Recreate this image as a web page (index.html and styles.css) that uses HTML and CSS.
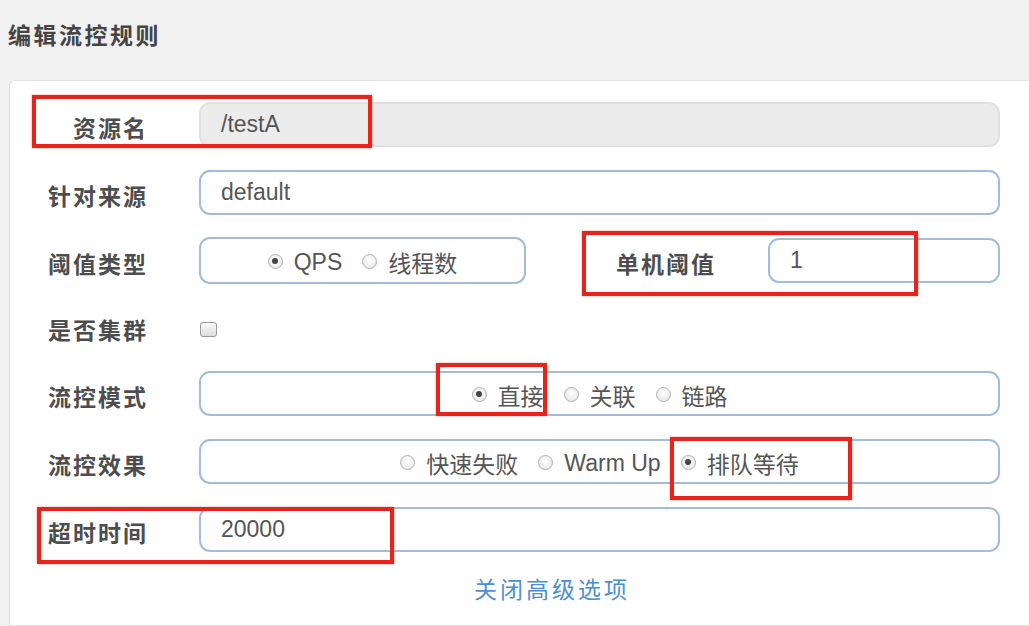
FILE: index.html
```html
<!DOCTYPE html>
<html lang="zh-CN">
<head>
<meta charset="utf-8">
<title>编辑流控规则</title>
<link rel="stylesheet" href="styles.css">
</head>
<body>
<div class="header"><h1 class="title">编辑流控规则</h1></div>
<div class="card">
  <div class="row">
    <div class="label">资源名</div>
    <div class="control"><div class="input disabled">/testA</div></div>
  </div>
  <div class="row">
    <div class="label">针对来源</div>
    <div class="control"><div class="input">default</div></div>
  </div>
  <div class="row">
    <div class="label">阈值类型</div>
    <div class="control split">
      <div class="radio-box narrow">
        <span class="opt"><span class="radio on"></span>QPS</span>
        <span class="opt"><span class="radio"></span>线程数</span>
      </div>
      <div class="label sub">单机阈值</div>
      <div class="input grow">1</div>
    </div>
  </div>
  <div class="row check-row">
    <div class="label">是否集群</div>
    <div class="control"><span class="checkbox"></span></div>
  </div>
  <div class="row">
    <div class="label">流控模式</div>
    <div class="control">
      <div class="radio-box">
        <span class="opt"><span class="radio on"></span>直接</span>
        <span class="opt"><span class="radio"></span>关联</span>
        <span class="opt"><span class="radio"></span>链路</span>
      </div>
    </div>
  </div>
  <div class="row">
    <div class="label">流控效果</div>
    <div class="control">
      <div class="radio-box">
        <span class="opt"><span class="radio"></span>快速失败</span>
        <span class="opt"><span class="radio"></span>Warm Up</span>
        <span class="opt"><span class="radio on"></span>排队等待</span>
      </div>
    </div>
  </div>
  <div class="row">
    <div class="label">超时时间</div>
    <div class="control"><div class="input">20000</div></div>
  </div>
  <div class="link-row"><a class="link">关闭高级选项</a></div>
</div>

<div class="mark m1"></div>
<div class="mark m2"></div>
<div class="mark m3"></div>
<div class="mark m4"></div>
<div class="mark m5"></div>
</body>
</html>
```
FILE: styles.css
```css
* { box-sizing: border-box; }
html, body { margin: 0; padding: 0; }
body {
  background: #f0f0f0;
  font-family: "Liberation Sans", "Noto Sans CJK SC", sans-serif;
  color: #555;
  width: 1029px;
  height: 626px;
  overflow: hidden;
  position: relative;
}
.header {
  height: 80px;
  display: flex;
  align-items: center;
  padding-left: 8px;
}
.title {
  margin: 0;
  font-size: 23px;
  font-weight: 600;
  letter-spacing: 2.5px;
  color: #444;
  padding-bottom: 12px;
}
.card {
  margin-left: 9px;
  background: #fff;
  border: 1px solid #e2e2e2;
  border-right: none;
  border-radius: 6px 0 0 0;
  height: 546px;
  padding: 21px 29px 0 0;
}
.row {
  display: flex;
  align-items: center;
  height: 45px;
  margin-bottom: 23px;
}
.check-row { height: 42px; }
.label {
  width: 138px;
  flex: none;
  text-align: right;
  font-size: 23px;
  font-weight: 600;
  letter-spacing: 2px;
  color: #4d4d4d;
  padding-top: 4px;
  margin-right: 51px;
}
.control {
  flex: 1;
  display: flex;
  align-items: center;
  height: 100%;
}
.input {
  flex: 1;
  height: 45px;
  border: 2px solid #a3bcdb;
  border-radius: 11px;
  padding-left: 20px;
  font-size: 23px;
  line-height: 40px;
  color: #555;
  background: #fff;
}
.input.disabled {
  background: #ececec;
  border-color: #e0e0e0;
}
.split .label.sub {
  width: 190px;
  margin-right: 52px;
}
.radio-box {
  flex: 1;
  height: 45px;
  border: 2px solid #a3bcdb;
  border-radius: 11px;
  display: flex;
  align-items: center;
  justify-content: center;
  gap: 20px;
  font-size: 23px;
  color: #555;
  padding-top: 3px;
}
.radio-box.narrow {
  flex: none;
  width: 327px;
  height: 47px;
}
.opt {
  display: inline-flex;
  align-items: center;
}
.radio {
  width: 15px;
  height: 15px;
  border-radius: 50%;
  border: 1px solid #b0b0b0;
  background: radial-gradient(circle at 50% 40%, #fff 0%, #e2e2e2 100%);
  margin-right: 11px;
  position: relative;
  margin-top: -2px;
}
.radio.on::after {
  content: "";
  position: absolute;
  left: 3.5px;
  top: 3.5px;
  width: 6px;
  height: 6px;
  border-radius: 50%;
  background: #444;
}
.checkbox {
  width: 17px;
  height: 15px;
  border: 1px solid #9a9a9a;
  border-radius: 3px;
  background: linear-gradient(#fafafa, #dcdcdc);
  margin-top: 4px;
  margin-left: 1px;
}
.link-row {
  text-align: center;
  margin-top: 1px;
  line-height: 30px;
  padding-left: 94px;
}
.link {
  font-size: 23px;
  letter-spacing: 3px;
  color: #4c8fd0;
  cursor: pointer;
}
.mark {
  position: absolute;
  border: 4px solid #e8231a;
  box-shadow: 0 0 2px rgba(232, 35, 26, 0.5);
  pointer-events: none;
}
.m1 { left: 32px; top: 95px; width: 340px; height: 53px; }
.m2 { left: 582px; top: 231px; width: 336px; height: 65px; }
.m3 { left: 436px; top: 363px; width: 111px; height: 53px; }
.m4 { left: 670px; top: 437px; width: 182px; height: 63px; }
.m5 { left: 37px; top: 507px; width: 357px; height: 57px; }
```
